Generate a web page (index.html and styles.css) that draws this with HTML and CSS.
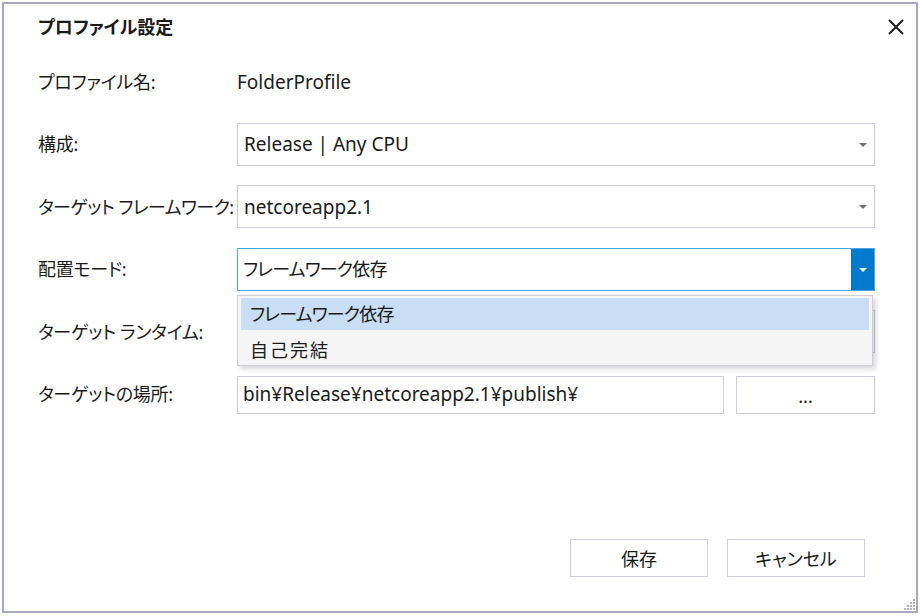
FILE: index.html
```html
<!DOCTYPE html>
<html lang="ja">
<head>
    <meta charset="UTF-8">
    <meta name="viewport" content="width=device-width, initial-scale=1.0">
    <title>プロファイル設定</title>
    <link rel="stylesheet" href="styles.css">
</head>
<body>
    <div class="dialog">
        <div class="dialog-header">
            <h1 class="dialog-title">プロファイル設定</h1>
            <button class="close-btn" aria-label="閉じる">
                <svg width="18" height="18" viewBox="0 0 18 18">
                    <path d="M2 2 L16 16 M16 2 L2 16" stroke="#1e1e1e" stroke-width="2" fill="none"/>
                </svg>
            </button>
        </div>

        <div class="form">
            <label class="form-label">プロファイル名:</label>
            <div class="form-value">FolderProfile</div>

            <label class="form-label">構成:</label>
            <div class="combo">
                <span class="combo-text">Release | Any CPU</span>
                <span class="combo-arrow"></span>
            </div>

            <label class="form-label tight">ターゲット フレームワーク:</label>
            <div class="combo">
                <span class="combo-text">netcoreapp2.1</span>
                <span class="combo-arrow"></span>
            </div>

            <label class="form-label">配置モード:</label>
            <div class="combo-wrap">
                <div class="combo focused">
                    <span class="combo-text ja">フレームワーク依存</span>
                    <span class="combo-arrow"></span>
                </div>
                <ul class="combo-list">
                    <li class="combo-item selected">フレームワーク依存</li>
                    <li class="combo-item wide">自己完結</li>
                </ul>
            </div>

            <label class="form-label">ターゲット ランタイム:</label>
            <!-- covered by the open list above -->
            <div class="combo">
                <span class="combo-text"></span>
                <span class="combo-arrow"></span>
            </div>

            <label class="form-label">ターゲットの場所:</label>
            <div class="path-row">
                <div class="textbox">bin¥Release¥netcoreapp2.1¥publish¥</div>
                <button class="btn browse-btn">...</button>
            </div>
        </div>

        <div class="dialog-footer">
            <button class="btn">保存</button>
            <button class="btn">キャンセル</button>
        </div>

        <svg class="grip" width="14" height="14" viewBox="0 0 14 14">
            <rect x="11" y="2" width="2" height="2" fill="#b4b4c4"/>
            <rect x="8" y="5" width="2" height="2" fill="#b4b4c4"/>
            <rect x="11" y="5" width="2" height="2" fill="#b4b4c4"/>
            <rect x="5" y="8" width="2" height="2" fill="#b4b4c4"/>
            <rect x="8" y="8" width="2" height="2" fill="#b4b4c4"/>
            <rect x="11" y="8" width="2" height="2" fill="#b4b4c4"/>
            <rect x="2" y="11" width="2" height="2" fill="#b4b4c4"/>
            <rect x="5" y="11" width="2" height="2" fill="#b4b4c4"/>
            <rect x="8" y="11" width="2" height="2" fill="#b4b4c4"/>
            <rect x="11" y="11" width="2" height="2" fill="#b4b4c4"/>
        </svg>
    </div>
</body>
</html>
```

FILE: styles.css
```css
* {
    margin: 0;
    padding: 0;
    box-sizing: border-box;
}
body {
    background: #ffffff;
    font-family: "Noto Sans", "Noto Sans CJK JP", sans-serif;
    font-feature-settings: "palt";
    color: #1a1a1a;
    font-size: 18px;
}
.dialog {
    position: relative;
    margin: 2px;
    width: 916px;
    height: 611px;
    border: 2px solid #a9a9c1;
    background: #ffffff;
    display: flex;
    flex-direction: column;
}
.dialog-header {
    display: flex;
    justify-content: space-between;
    align-items: center;
    padding: 11px 11px 0 34px;
    height: 35px;
}
.dialog-title {
    font-size: 18px;
    font-weight: bold;
    line-height: 24px;
}
.close-btn {
    border: none;
    background: none;
    width: 18px;
    height: 18px;
    display: flex;
}
.form {
    display: grid;
    grid-template-columns: 199px 1fr;
    grid-auto-rows: 43px;
    row-gap: 19.6px;
    align-items: center;
    margin-top: 21px;
    padding: 0 41px 0 34px;
}
.form-label {
    line-height: 24px;
    white-space: nowrap;
    letter-spacing: -0.25px;
}
.form-label.tight {
    letter-spacing: -0.55px;
}
.form-value {
    font-size: 19px;
    line-height: 24px;
}
.combo-wrap {
    position: relative;
    height: 43px;
}
.combo {
    height: 43px;
    border: 1px solid #cccedb;
    display: flex;
    align-items: center;
    background: #ffffff;
}
.combo-text {
    flex: 1;
    padding-left: 6px;
    font-size: 19px;
    line-height: 24px;
    white-space: nowrap;
}
.combo-text.ja {
    font-size: 18px;
    letter-spacing: -0.8px;
}
.combo-arrow {
    width: 23px;
    align-self: stretch;
    display: flex;
    align-items: center;
    justify-content: center;
}
.combo-arrow::after {
    content: "";
    border-left: 4px solid transparent;
    border-right: 4px solid transparent;
    border-top: 4px solid #717171;
    margin-top: 1px;
}
.combo.focused {
    border-color: #4ca6ea;
}
.combo.focused .combo-text {
    padding-left: 5px;
}
.combo.focused .combo-arrow {
    background: #007acc;
}
.combo.focused .combo-arrow::after {
    border-top-color: #ffffff;
}
.combo-list {
    position: absolute;
    top: 47px;
    left: 0;
    right: 2px;
    list-style: none;
    background: #f5f5f5;
    border: 1px solid #cccedb;
    padding: 2px 3px 0 3px;
    box-shadow: 3px 3px 5px rgba(0, 0, 0, 0.16);
    z-index: 2;
}
.combo-item {
    height: 32px;
    line-height: 32px;
    padding-left: 9px;
    letter-spacing: -0.8px;
}
.combo-item.wide {
    margin-top: 4px;
    height: 31px;
    letter-spacing: 2px;
}
.combo-item.selected {
    background: #c9def5;
}
.path-row {
    display: flex;
    gap: 12px;
    align-items: center;
    padding-top: 2px;
}
.textbox {
    flex: 1;
    height: 38px;
    border: 1px solid #cccedb;
    padding-left: 5px;
    font-size: 19px;
    line-height: 34px;
    white-space: nowrap;
}
.btn {
    height: 38px;
    width: 138px;
    border: 1px solid #cccedb;
    background: #ffffff;
    font-family: inherit;
    font-feature-settings: inherit;
    font-size: 18px;
    color: #1a1a1a;
}
.browse-btn {
    width: 139px;
    padding-top: 2px;
}
.dialog-footer {
    margin-top: auto;
    display: flex;
    justify-content: flex-end;
    gap: 19px;
    padding: 0 51px 34px 0;
}
.grip {
    position: absolute;
    right: 0;
    bottom: 0;
}
```
